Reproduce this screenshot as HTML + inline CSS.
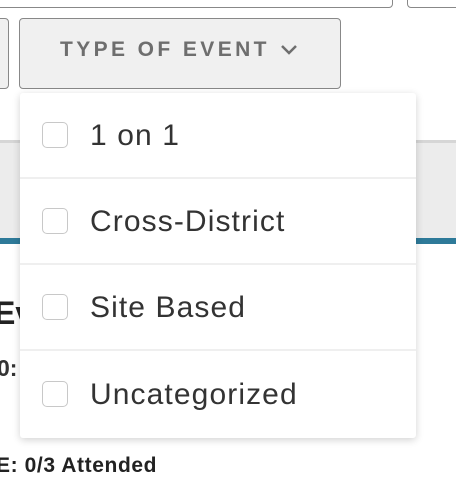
<!DOCTYPE html>
<html><head><style>
body{margin:0;width:456px;height:474px;overflow:hidden;background:#fff;font-family:"Liberation Sans",sans-serif;position:relative}
.a{position:absolute}
.r{height:86px;border-bottom:2px solid #efefef;box-sizing:border-box;display:flex;align-items:center}
.c{width:26px;height:26px;border:1.5px solid #c8c8c8;border-radius:5px;margin:0 22px 0 22px;box-sizing:border-box;flex:none}
.t{font-size:30px;color:#333;letter-spacing:1.1px;position:relative;top:1px}
</style></head><body>
<div class="a" style="left:-10px;top:-10px;width:401px;height:16px;border:1.5px solid #888;border-radius:4px"></div>
<div class="a" style="left:407px;top:-10px;width:60px;height:16px;border:1.5px solid #888;border-radius:4px"></div>
<div class="a" style="left:-10px;top:18px;width:17px;height:69px;border:1.5px solid #888;border-radius:4px;background:#f0f0f0"></div>
<div class="a" style="left:19px;top:18px;width:320px;height:69px;border:1.5px solid #888;border-radius:4px;background:#f0f0f0"></div>
<div class="a" style="left:60px;top:38px;font-size:21px;font-weight:bold;color:#6e6e6e;letter-spacing:3.4px">TYPE OF EVENT</div>
<svg class="a" style="left:279px;top:43px" width="20" height="14"><path d="M3 3 L10 10 L17 3" fill="none" stroke="#6e6e6e" stroke-width="2.5"/></svg>
<div class="a" style="left:0;top:140px;width:456px;height:98px;background:#ececec;border-top:3px solid #d6d6d6;box-sizing:border-box"></div>
<div class="a" style="left:0;top:238px;width:456px;height:6px;background:#2e7a99"></div>
<div class="a" style="left:-6px;top:295px;font-size:32px;font-weight:bold;color:#222">Ev</div>
<div class="a" style="left:-3px;top:355px;font-size:23px;font-weight:bold;color:#333">0:</div>
<div class="a" style="left:-4px;top:454px;font-size:21px;font-weight:bold;color:#222;letter-spacing:0.6px">E: 0/3 Attended</div>
<div class="a" style="left:20px;top:93px;width:396px;height:345px;background:#fff;box-shadow:0 2px 8px rgba(0,0,0,.18);border-radius:3px">
<div class="r"><span class="c"></span><span class="t">1 on 1</span></div>
<div class="r"><span class="c"></span><span class="t">Cross-District</span></div>
<div class="r"><span class="c"></span><span class="t">Site Based</span></div>
<div class="r" style="border-bottom:none"><span class="c"></span><span class="t">Uncategorized</span></div>
</div>
</body></html>
